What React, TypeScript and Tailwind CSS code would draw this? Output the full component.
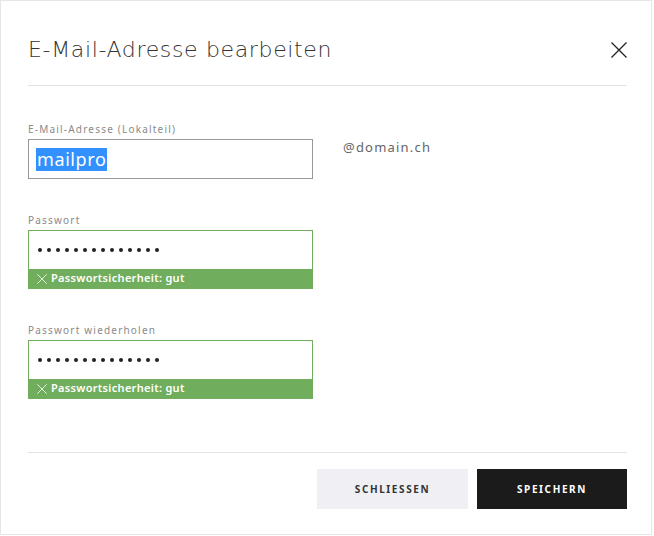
const fields = [
  { label: "Passwort", dots: 14 },
  { label: "Passwort wiederholen", dots: 14 },
];

function CloseIcon({ className }: { className?: string }) {
  return (
    <svg viewBox="0 0 16 16" className={className} fill="none" stroke="currentColor" strokeWidth={1.3}>
      <path d="M0.5 0.5 L15.5 15.5 M15.5 0.5 L0.5 15.5" />
    </svg>
  );
}

function StrengthField({ label, dots }: { label: string; dots: number }) {
  return (
    <div className="flex flex-col">
      <label className="text-[10px] tracking-[1.2px] text-[#8a8a8a] leading-[14px] mb-[3px]">{label}</label>
      <div className="w-[285px] border border-[#70ae5e]">
        <div className="h-[38px] flex items-center gap-[5px] pl-[9px]" aria-label="Passwort">
          {Array.from({ length: dots }).map((_, i) => (
            <span key={i} className="shrink-0 w-[4px] h-[4px] rounded-full bg-[#222]" />
          ))}
        </div>
        <div className="h-[19px] bg-[#70ae5e] flex items-center gap-[4px] px-[8px] text-[11px] font-semibold tracking-[0.3px] text-white">
          <CloseIcon className="w-[10px] h-[10px]" />
          Passwortsicherheit: gut
        </div>
      </div>
    </div>
  );
}

export default function App() {
  return (
    <div className="w-[652px] h-[535px] border border-[#e6e6e6] bg-white font-['Noto_Sans',sans-serif] flex flex-col pl-[27px] pr-[24px]">
      <div className="flex items-center justify-between pt-[35px] pb-[22px] border-b border-[#e3e3e3]">
        <h2 className="font-['DejaVu_Sans',sans-serif] text-[22px] font-light tracking-[0.65px] text-[#333] leading-[27px]">E-Mail-Adresse bearbeiten</h2>
        <CloseIcon className="w-[16px] h-[16px] text-[#222]" />
      </div>

      <div className="flex flex-col pt-[36px] h-[367px] border-b border-[#e3e3e3]">
        <div className="flex items-start">
          <div className="flex flex-col">
            <label className="text-[10px] tracking-[1.2px] text-[#8a8a8a] leading-[14px] mb-[3px]">E-Mail-Adresse (Lokalteil)</label>
            <div className="w-[285px] h-[40px] border border-[#999] flex items-center px-[7px]">
              <span className="bg-[#3390ff] text-white text-[18px] tracking-[0.6px] leading-[23px] px-[1px]">mailpro</span>
            </div>
          </div>
          <span className="ml-[30px] mt-[16px] text-[13px] tracking-[1.2px] text-[#666]">@domain.ch</span>
        </div>
        <div className="flex flex-col gap-[34px] mt-[34px]">
          {fields.map((f, i) => (
            <StrengthField key={i} label={f.label} dots={f.dots} />
          ))}
        </div>
      </div>

      <div className="flex justify-end gap-[9px] pt-[16px]">
        <button className="w-[151px] h-[40px] bg-[#f0f0f4] text-[10px] font-bold tracking-[1.6px] text-[#333]">SCHLIESSEN</button>
        <button className="w-[150px] h-[40px] bg-[#1b1b1c] text-[10px] font-bold tracking-[1.6px] text-white">SPEICHERN</button>
      </div>
    </div>
  );
}
